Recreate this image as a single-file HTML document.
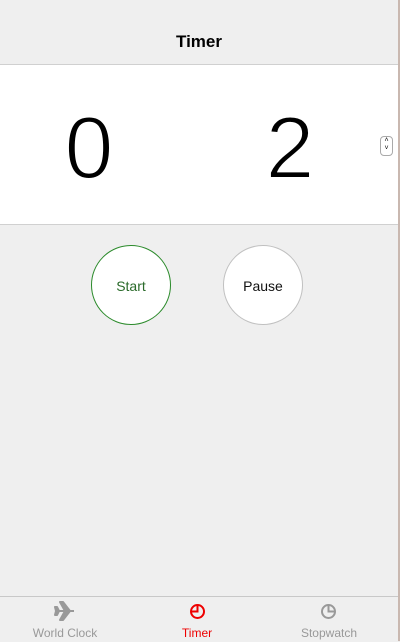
<!DOCTYPE html>
<html><head><style>
body{margin:0;width:400px;height:641px;background:#efefef;font-family:"Liberation Sans",sans-serif;position:relative;overflow:hidden}
.edge{position:absolute;left:398px;top:0;width:2px;height:641px;background:#c9b8b0}
.hdr{position:absolute;top:0;left:0;width:398px;height:64px;border-bottom:1px solid #d0d0d0;text-align:center;line-height:84px;font-weight:bold;font-size:17px}
.band{position:absolute;top:65px;left:0;width:398px;height:159px;background:#fff;border-bottom:1px solid #d0d0d0}
.d{position:absolute;top:38px;font-size:88px;line-height:90px;width:100px;text-align:center;-webkit-text-stroke:2px #fff}
.sp{position:absolute;left:380px;top:71px;width:11px;height:18px;border:1px solid #aaa;border-radius:4px;font-size:7px;line-height:8px;text-align:center}
.btn{position:absolute;top:245px;width:78px;height:78px;border-radius:50%;background:#fff;text-align:center;line-height:80px;font-size:14px}
.tab{position:absolute;top:596px;left:0;width:398px;height:45px;border-top:1px solid #c8c8c8}
.t{position:absolute;top:29px;font-size:12px;width:120px;text-align:center;color:#999}
</style></head><body>
<div class="edge"></div>
<div class="hdr">Timer</div>
<div class="band">
<div class="d" style="left:39px">0</div>
<div class="d" style="left:240px">2</div>
<div class="sp">˄<br>˅</div>
</div>
<div class="btn" style="left:91px;border:1px solid #2a8a2a;color:#2a6a2a">Start</div>
<div class="btn" style="left:223px;border:1px solid #c0c0c0;color:#111">Pause</div>
<div class="tab">
<svg style="position:absolute;left:54px;top:4px" width="22" height="20" viewBox="0 0 22 20"><path d="M2 10h18M11 10L6 1h3l7 9-7 9H6zM2 10L1 6h2l2 4-2 4H1z" fill="#999" stroke="#999" stroke-width="2" stroke-linejoin="round"/></svg>
<svg style="position:absolute;left:189px;top:6px" width="17" height="17" viewBox="0 0 17 17"><circle cx="8.5" cy="8.5" r="6.5" fill="none" stroke="#e00" stroke-width="2"/><path d="M8.5 3v5.5H3" fill="none" stroke="#e00" stroke-width="2"/></svg>
<svg style="position:absolute;left:320px;top:6px" width="17" height="17" viewBox="0 0 17 17"><circle cx="8.5" cy="8.5" r="6.5" fill="none" stroke="#999" stroke-width="2"/><path d="M8.5 3v5.5H14" fill="none" stroke="#999" stroke-width="2"/></svg>
<div class="t" style="left:5px">World Clock</div>
<div class="t" style="left:137px;color:#e00">Timer</div>
<div class="t" style="left:269px">Stopwatch</div>
</div>
</body></html>
